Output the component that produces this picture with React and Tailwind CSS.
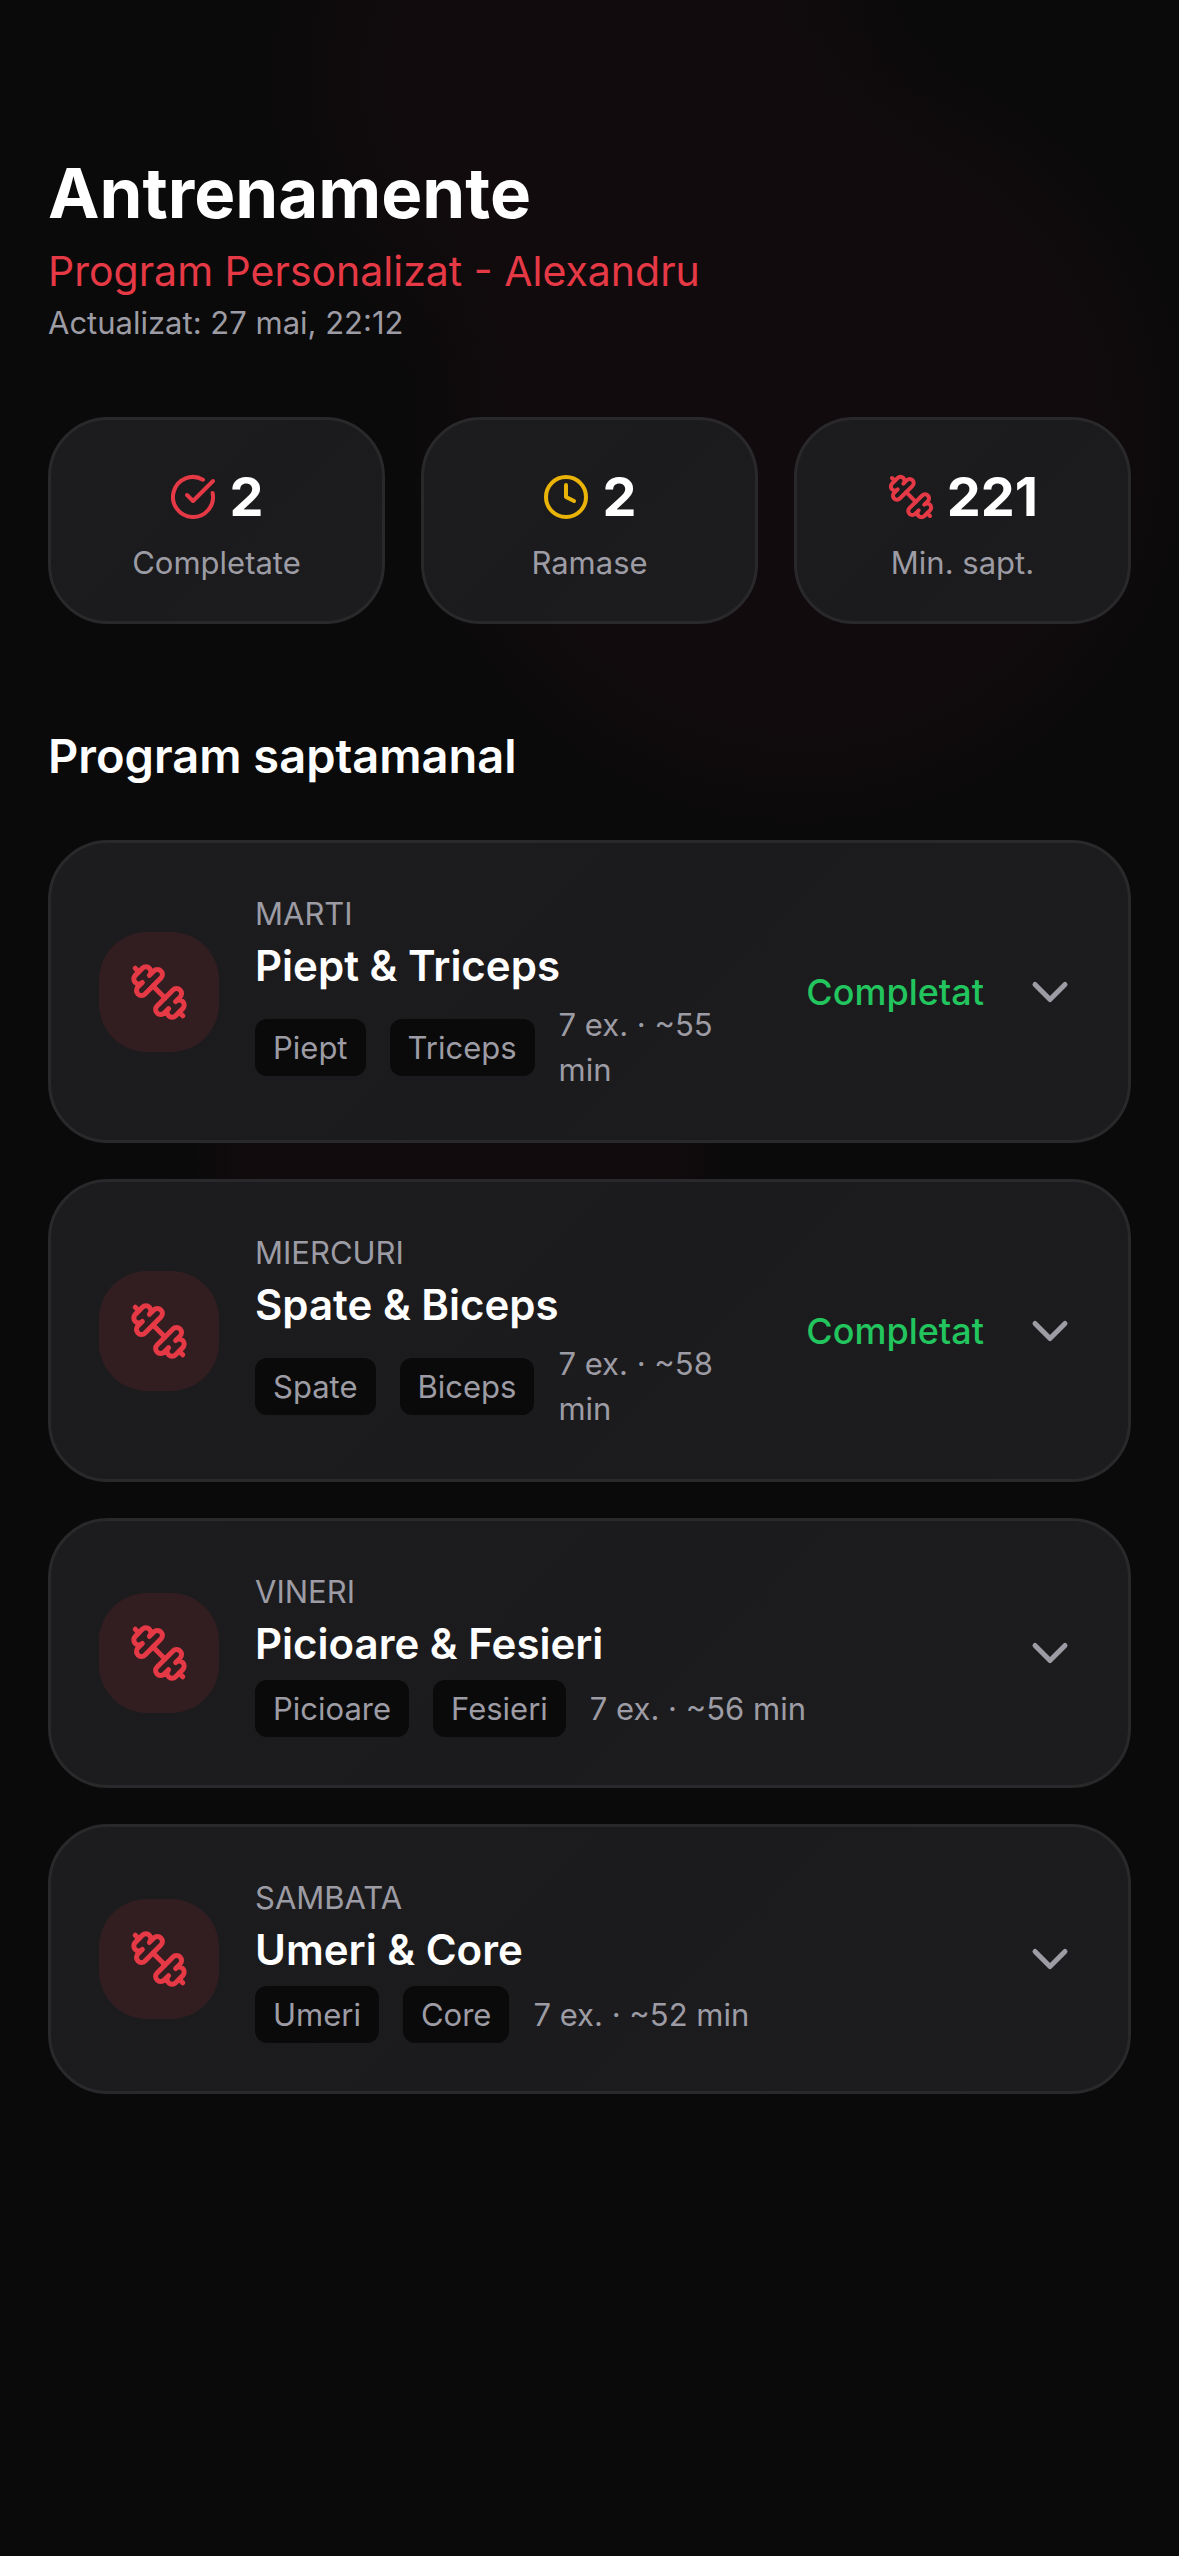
import { useState } from 'react';
import { ChevronDown, CircleCheckBig, Clock } from 'lucide-react';

const stats = [
  { label: 'Completate', value: 2, icon: CircleCheckBig, color: 'text-[#e63946]' },
  { label: 'Ramase', value: 2, icon: Clock, color: 'text-[#eab308]' },
  { label: 'Min. sapt.', value: 221, icon: DumbbellIcon, color: 'text-[#e63946]' },
];

const workouts = [
  { day: 'Marti', title: 'Piept & Triceps', tags: ['Piept', 'Triceps'], exercises: 7, minutes: 55, done: true },
  { day: 'Miercuri', title: 'Spate & Biceps', tags: ['Spate', 'Biceps'], exercises: 7, minutes: 58, done: true },
  { day: 'Vineri', title: 'Picioare & Fesieri', tags: ['Picioare', 'Fesieri'], exercises: 7, minutes: 56, done: false },
  { day: 'Sambata', title: 'Umeri & Core', tags: ['Umeri', 'Core'], exercises: 7, minutes: 52, done: false },
];

function DumbbellIcon({ className }) {
  return (
    <svg
      className={className}
      viewBox="0 0 24 24"
      fill="none"
      stroke="currentColor"
      strokeWidth="2"
      strokeLinecap="round"
      strokeLinejoin="round"
      aria-hidden="true"
    >
      <path d="M14.4 14.4 9.6 9.6" />
      <path d="M18.657 21.485a2 2 0 1 1-2.829-2.828l-1.767 1.768a2 2 0 1 1-2.829-2.829l6.364-6.364a2 2 0 1 1 2.829 2.829l-1.768 1.767a2 2 0 1 1 2.828 2.829z" />
      <path d="m21.5 21.5-1.4-1.4" />
      <path d="M3.9 3.9 2.5 2.5" />
      <path d="M6.404 12.768a2 2 0 1 1-2.829-2.829l1.768-1.767a2 2 0 1 1-2.828-2.829l2.828-2.828a2 2 0 1 1 2.829 2.828l1.767-1.768a2 2 0 1 1 2.829 2.829z" />
    </svg>
  );
}

function StatCard({ label, value, icon: Icon, color }) {
  return (
    <div className="flex flex-col items-center gap-[3px] rounded-[60px] border-3 border-[#29292b] bg-[linear-gradient(135deg,#1c1c1e,#1b1b1d_50%,#1c1c1e)] p-9">
      <div className="flex items-center gap-3">
        <Icon className={`size-12 ${color}`} />
        <span className="text-[54px] leading-[81px] font-bold">{value}</span>
      </div>
      <span className="text-[31px] leading-[45px] text-[#9d9ca5]">{label}</span>
    </div>
  );
}

function WorkoutCard({ workout }) {
  const [open, setOpen] = useState(false);

  return (
    <button
      type="button"
      aria-expanded={open}
      onClick={() => setOpen(!open)}
      className="flex w-full items-center gap-9 rounded-[60px] border-3 border-[#29292b] bg-[linear-gradient(135deg,#1c1c1e,#1b1b1d_50%,#1c1c1e)] p-12 text-left"
    >
      <span className="flex size-30 shrink-0 items-center justify-center rounded-[48px] bg-[#321e21]">
        <DumbbellIcon className="size-15 text-[#e63946]" />
      </span>
      <span className="flex min-w-0 flex-1 flex-col">
        <span className="text-[31px] leading-[45px] text-[#9d9ca5] uppercase">{workout.day}</span>
        <span className="text-[42px] leading-[60px] font-semibold">{workout.title}</span>
        <span className="mt-[6px] flex items-center gap-6 text-[31px] leading-[45px] text-[#9d9ca5]">
          {workout.tags.map((tag) => (
            <span key={tag} className="rounded-xl bg-[#0a0a0a] px-[18px] py-[6px]">{tag}</span>
          ))}
          <span>{workout.exercises} ex. · ~{workout.minutes} min</span>
        </span>
      </span>
      {workout.done && <span className="text-[36px] leading-[54px] font-medium text-[#22c55e]">Completat</span>}
      <ChevronDown className={open ? 'size-15 shrink-0 rotate-180 text-[#9d9ca5]' : 'size-15 shrink-0 text-[#9d9ca5]'} />
    </button>
  );
}

export default function App() {
  return (
    <div className="min-h-screen bg-[#0a0a0a] bg-[radial-gradient(circle_at_68%_17%,#110b0d_0,#110b0d_280px,#110b0d00_420px),radial-gradient(circle_at_50%_3%,#110b0d_0,#110b0d_180px,#110b0d00_360px),radial-gradient(circle_at_39%_45%,#120b0d_0,#120b0d_200px,#120b0d00_280px)] px-12 pt-36 pb-24 font-['Inter',sans-serif] text-white">
      <header>
        <h1 className="text-[69px] leading-[98px] font-bold">Antrenamente</h1>
        <p className="text-[41px] leading-[58px] text-[#e63946]">Program Personalizat - Alexandru</p>
        <p className="text-[31px] leading-[45px] text-[#9d9ca5]">Actualizat: 27 mai, 22:12</p>
      </header>

      <section className="mt-18 grid grid-cols-3 gap-9">
        {stats.map((stat) => (
          <StatCard key={stat.label} {...stat} />
        ))}
      </section>

      <section className="mt-24">
        <h2 className="text-[47px] leading-[72px] font-semibold">Program saptamanal</h2>
        <div className="mt-12 flex flex-col gap-9">
          {workouts.map((workout) => (
            <WorkoutCard key={workout.day} workout={workout} />
          ))}
        </div>
      </section>
    </div>
  );
}
